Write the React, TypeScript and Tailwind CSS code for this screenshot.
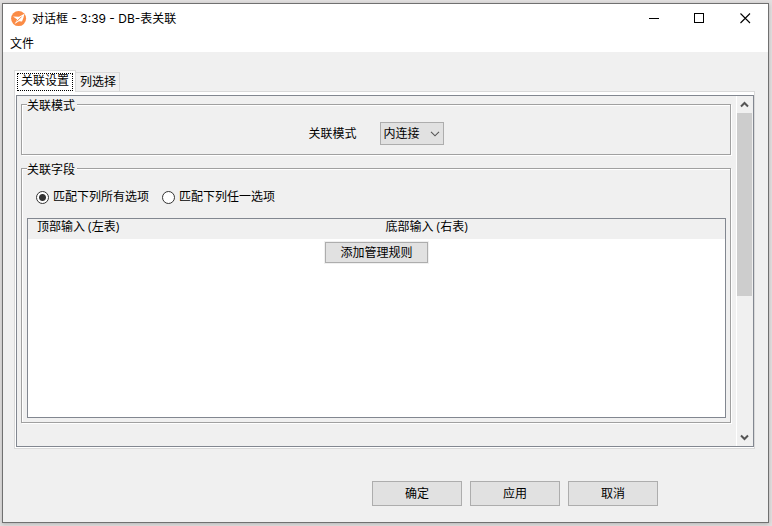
import { useState } from "react";

const joinTypes = ["内连接", "左连接", "右连接", "全连接"];

function Logo() {
  return (
    <svg width="16" height="16" viewBox="0 0 16 16" aria-hidden="true">
      <circle cx="7.6" cy="7.6" r="7.5" fill="#fb8c46" />
      <path d="M2 5.6 8 5.8 13.4 2.8 12.4 7 11 10.4 8 10.2 3.6 13 6.2 8.4Z" fill="#fff" />
      <path d="M5.8 10.4 10.6 5.6" stroke="#fb8c46" strokeWidth="1" fill="none" />
    </svg>
  );
}

function TitleBar() {
  return (
    <header className="bg-white">
      <div className="flex h-[29px] items-center justify-between pl-2">
        <div className="flex items-center gap-[5px]">
          <Logo />
          <h1 className="font-['Inter','Noto_Sans_CJK_SC',sans-serif] text-[12px] leading-4">
            对话框 - 3:39 - DB-表关联
          </h1>
        </div>
        <div className="flex h-full">
          <button aria-label="最小化" className="flex w-[46px] items-center justify-center">
            <svg width="11" height="11" viewBox="0 0 11 11" shapeRendering="crispEdges">
              <path d="M0 5.5h10" stroke="#000" />
            </svg>
          </button>
          <button aria-label="最大化" className="flex w-[45px] items-center justify-center">
            <svg width="11" height="11" viewBox="0 0 11 11" shapeRendering="crispEdges">
              <path d="M.5.5h9v9h-9z" stroke="#000" fill="none" />
            </svg>
          </button>
          <button aria-label="关闭" className="flex w-[46px] items-center justify-center">
            <svg width="11" height="11" viewBox="0 0 11 11">
              <path d="M.5.5l9.5 9.5M10 .5l-9.5 9.5" stroke="#000" strokeWidth="1.1" />
            </svg>
          </button>
        </div>
      </div>
      <nav className="flex h-[19px] items-end pl-[7px]">
        <button className="leading-4">文件</button>
      </nav>
    </header>
  );
}

function ScrollBar() {
  return (
    <div className="flex w-[17px] shrink-0 flex-col border-x border-l-white border-r-[#f0f0f0] bg-[#f0f0f0]">
      <button aria-label="向上滚动" className="flex h-[17px] items-center justify-center">
        <svg width="9" height="7" viewBox="0 0 9 7">
          <path d="M1 5.5 4.5 2 8 5.5" stroke="#555" strokeWidth="2" fill="none" />
        </svg>
      </button>
      <div className="flex-1">
        <div className="h-[58%] bg-[#cdcdcd]"></div>
      </div>
      <button aria-label="向下滚动" className="flex h-[17px] items-center justify-center">
        <svg width="9" height="7" viewBox="0 0 9 7">
          <path d="M1 1.5 4.5 5 8 1.5" stroke="#555" strokeWidth="2" fill="none" />
        </svg>
      </button>
    </div>
  );
}

function Radio({ label, checked, onChange }: { label: string; checked: boolean; onChange: () => void }) {
  return (
    <label className="flex items-center gap-1 leading-[18px]">
      <input
        type="radio"
        name="match"
        checked={checked}
        onChange={onChange}
        className="h-[13px] w-[13px] appearance-none rounded-full border border-[#333] bg-white checked:bg-[radial-gradient(circle,#333_0,#333_3px,#fff_4px)]"
      />
      {label}
    </label>
  );
}

export default function App() {
  const [tab, setTab] = useState(0);
  const [match, setMatch] = useState("all");

  return (
    <div className="h-screen bg-[#e2e0e0] pt-[3px] pr-[3px] pb-[3px] pl-[2px] font-['Open_Sans','Noto_Sans_CJK_SC',sans-serif] text-[12px] text-black">
      <div className="flex h-full flex-col border border-[#707070] bg-[#f0f0f0] shadow-[0_1px_4px_#b0b0b0]">
        <TitleBar />

        <main className="flex min-h-0 flex-1 flex-col pt-[18px] pr-[13px] pl-[11px]">
          {/* Tabs */}
          <div role="tablist" className="flex h-[21px] shrink-0 items-end">
            <button
              role="tab"
              aria-selected={tab === 0}
              onClick={() => setTab(0)}
              className="z-10 -mb-px flex h-[22px] w-[62px] border border-b-0 border-[#d9d9d9] bg-white px-[2px] pt-[2px] pb-px"
            >
              <span className="h-full w-full border border-dotted border-black leading-[14px]">关联设置</span>
            </button>
            <button
              role="tab"
              aria-selected={tab === 1}
              onClick={() => setTab(1)}
              className="h-[19px] w-11 border border-b-0 border-l-0 border-[#d9d9d9] pl-px leading-[18px]"
            >
              列选择
            </button>
          </div>

          {/* Panel */}
          <div className="flex min-h-0 flex-1 border border-[#d9d9d9] bg-white px-px pt-[3px] pb-px pr-0">
            <div className="flex min-w-0 flex-1 border border-[#828790] bg-[#f0f0f0]">
              <div className="flex min-w-0 flex-1 flex-col gap-[5px] pr-[5px] pb-[23px] pl-1">
                <fieldset className="min-w-0 border border-[#a0a0a0] px-[5px] py-[9px] shadow-[1px_1px_0_#fff,inset_1px_1px_0_#fff]">
                  <legend className="h-[17px] bg-[#f0f0f0] pr-[2px] leading-[19px]">关联模式</legend>
                  <div className="flex items-center justify-center gap-[23px]">
                    <label htmlFor="join">关联模式</label>
                    <div className="relative">
                      <select
                        id="join"
                        className="block h-[23px] w-16 appearance-none border border-[#adadad] bg-[#e1e1e1] pl-[3px]"
                      >
                        {joinTypes.map((type) => (
                          <option key={type}>{type}</option>
                        ))}
                      </select>
                      <svg
                        width="10"
                        height="6"
                        viewBox="0 0 10 6"
                        className="pointer-events-none absolute top-[9px] right-1"
                      >
                        <path d="M1 .8 5 4.8 9 .8" stroke="#555" strokeWidth="1.1" fill="none" />
                      </svg>
                    </div>
                  </div>
                </fieldset>

                <fieldset className="flex min-w-0 flex-1 flex-col border border-[#a0a0a0] pt-[11px] pr-1 pb-1 pl-[5px] shadow-[1px_1px_0_#fff,inset_1px_1px_0_#fff]">
                  <legend className="h-[17px] bg-[#f0f0f0] pr-[2px] leading-[19px]">关联字段</legend>
                  <div className="flex gap-[13px] pl-[9px]">
                    <Radio label="匹配下列所有选项" checked={match === "all"} onChange={() => setMatch("all")} />
                    <Radio label="匹配下列任一选项" checked={match === "any"} onChange={() => setMatch("any")} />
                  </div>
                  <div className="mt-3 flex-1 border border-[#828790] bg-white">
                    <table className="w-full table-fixed">
                      <thead className="bg-[#f0f0f0]">
                        <tr className="h-5 text-left align-top">
                          <th className="pl-[9px] align-top leading-[15px] font-normal">顶部输入 (左表)</th>
                          <th className="pl-[9px] align-top leading-[15px] font-normal">底部输入 (右表)</th>
                        </tr>
                      </thead>
                      <tbody>
                        <tr>
                          <td colSpan={2} className="pt-[3px] text-center">
                            <button className="h-[21px] w-[103px] border border-[#adadad] bg-[#e1e1e1] leading-4 shadow-[0_0_0_1px_#f0f0f0]">
                              添加管理规则
                            </button>
                          </td>
                        </tr>
                      </tbody>
                    </table>
                  </div>
                </fieldset>
              </div>
              <ScrollBar />
            </div>
          </div>
        </main>

        <footer className="flex justify-end gap-2 pt-8 pr-[110px] pb-4">
          {["确定", "应用", "取消"].map((text) => (
            <button key={text} className="h-[25px] w-[90px] border border-[#adadad] bg-[#e1e1e1]">
              {text}
            </button>
          ))}
        </footer>
      </div>
    </div>
  );
}
